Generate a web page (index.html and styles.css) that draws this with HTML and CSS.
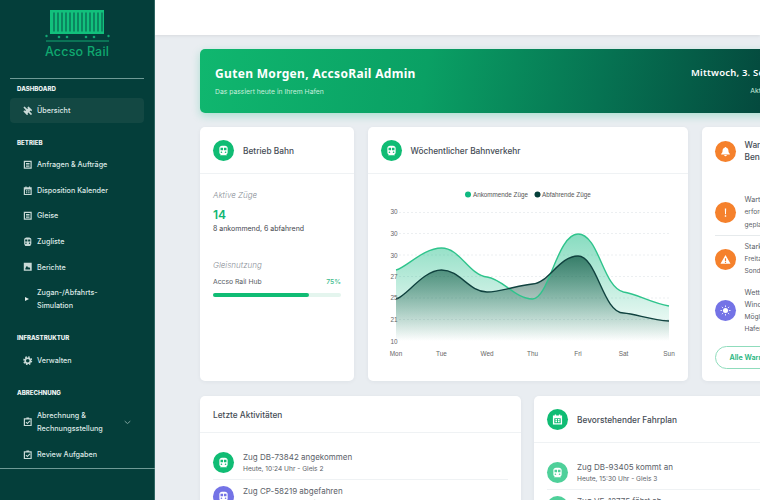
FILE: index.html
```html
<!DOCTYPE html>
<html lang="de">
<head>
<meta charset="utf-8">
<title>Accso Rail</title>
<link rel="stylesheet" href="styles.css">
</head>
<body>
<svg class="defs" aria-hidden="true">
  <symbol id="i-train" viewBox="0 0 24 24"><path fill="currentColor" fill-rule="evenodd" d="M12 1.500C6.500 1.500 3 2.500 3 6.500V17a3.500 3.500 0 0 0 3 3.400L4.500 22v.5h15V22L18 20.400a3.500 3.500 0 0 0 3-3.400V6.500C21 2.500 17.500 1.500 12 1.500ZM5.500 6h5.500v5.500H5.500Zm7.500 0h5.500v5.500H13ZM7.500 14a1.800 1.800 0 1 1 0 3.600a1.800 1.800 0 0 1 0-3.600Zm9 0a1.800 1.800 0 1 1 0 3.600a1.800 1.800 0 0 1 0-3.600Z"/></symbol>
  <symbol id="i-board" viewBox="0 0 24 24"><path fill="currentColor" fill-rule="evenodd" d="M2 2h20v20H2ZM5 5v14h14V5ZM7.500 7.500h9v2.500h-9Zm0 4h9V14h-9Zm0 3.500h9v2h-9Z"/></symbol>
  <symbol id="i-cal" viewBox="0 0 24 24"><path fill="currentColor" fill-rule="evenodd" d="M6 1h3v2h6V1h3v2h4v20H2V3h4ZM5 9v11h14V9ZM7.500 11h3.500v3H7.500Zm5.500 0h3.500v3H13Zm-5.500 4.500h3.500V18H7.500Zm5.500 0h3.500V18H13Z"/></symbol>
  <symbol id="i-chart" viewBox="0 0 24 24"><path fill="currentColor" fill-rule="evenodd" d="M2 2h20v20H2ZM6 19h12v-3.500l-3-3-2 2-3-5-4 6Z"/></symbol>
  <symbol id="i-gear" viewBox="0 0 24 24"><circle cx="12" cy="12" r="6.500" fill="none" stroke="currentColor" stroke-width="4"/><circle cx="12" cy="12" r="9.500" fill="none" stroke="currentColor" stroke-width="4" stroke-dasharray="4 3.460"/></symbol>
  <symbol id="i-check" viewBox="0 0 24 24"><path fill="currentColor" fill-rule="evenodd" d="M8.500 1h7v2H22v20H2V3h6.500ZM5 6v14h14V6ZM16.500 9l2 2-7.500 7.500-4.500-4.500 2-2 2.500 2.500Z"/></symbol>
  <symbol id="i-tools" viewBox="0 0 24 24"><path fill="currentColor" d="M4 1 1 4l6.500 6.500-2 2L3 11 1 14l9 9 3-2-1.500-2.500 2-2L20 23l3-3-6.500-6.500 2-2L21 13l2-3-9-9-3 2 1.500 2.500-2 2Z"/></symbol>
</svg>
<div class="app">
  <aside class="sidebar">
    <div class="brand">
      <svg class="logo" viewBox="0 0 65 33" width="65" height="33" aria-hidden="true">
        <rect x="5" y="0" width="54" height="24" fill="#12c07c"/>
        <path d="M9 2.500v19M13 2.500v19M17 2.500v19M21 2.500v19M25 2.500v19M29 2.500v19M33 2.500v19M37 2.500v19M41 2.500v19M45 2.500v19M49 2.500v19M53 2.500v19M57 2.500v19" stroke="#07584a" stroke-width="1.100"/>
        <path d="M1 31h63" stroke="#12a873" stroke-width="1"/>
        <circle cx="1.500" cy="26" r="1.200" fill="#12a873"/><circle cx="63.500" cy="26" r="1.200" fill="#12a873"/>
        <circle cx="14" cy="27" r="1.300" fill="#12a873"/><circle cx="22" cy="27" r="1.300" fill="#12a873"/><circle cx="41" cy="27" r="1.300" fill="#12a873"/><circle cx="49" cy="27" r="1.300" fill="#12a873"/>
      </svg>
      <div class="brand-name">Accso Rail</div>
    </div>
    <nav class="nav">
      <div class="nav-label">DASHBOARD</div>
      <a class="nav-item active"><svg class="nav-icon"><use href="#i-tools"/></svg><span>Übersicht</span></a>
      <div class="nav-label spaced">BETRIEB</div>
      <a class="nav-item"><svg class="nav-icon"><use href="#i-board"/></svg><span>Anfragen &amp; Aufträge</span></a>
      <a class="nav-item"><svg class="nav-icon"><use href="#i-cal"/></svg><span>Disposition Kalender</span></a>
      <a class="nav-item"><svg class="nav-icon"><use href="#i-board"/></svg><span>Gleise</span></a>
      <a class="nav-item"><svg class="nav-icon"><use href="#i-train"/></svg><span>Zugliste</span></a>
      <a class="nav-item"><svg class="nav-icon"><use href="#i-chart"/></svg><span>Berichte</span></a>
      <a class="nav-item tall"><span class="nav-play"></span><span>Zugan-/Abfahrts-<br>Simulation</span></a>
      <div class="nav-label spaced">INFRASTRUKTUR</div>
      <a class="nav-item"><svg class="nav-icon"><use href="#i-gear"/></svg><span>Verwalten</span></a>
      <div class="nav-label spaced">ABRECHNUNG</div>
      <a class="nav-item tall"><svg class="nav-icon"><use href="#i-check"/></svg><span>Abrechnung &amp;<br>Rechnungsstellung</span>
        <svg class="chev" viewBox="0 0 10 6"><path d="M1 1l4 3.500L9 1" fill="none" stroke="currentColor" stroke-width="1.200"/></svg></a>
      <a class="nav-item"><svg class="nav-icon"><use href="#i-check"/></svg><span>Review Aufgaben</span></a>
    </nav>
    <div class="side-foot"></div>
  </aside>

  <main class="main">
    <header class="topbar"></header>
    <div class="content">
      <section class="banner">
        <div>
          <h1>Guten Morgen, AccsoRail Admin</h1>
          <p>Das passiert heute in Ihrem Hafen</p>
        </div>
        <div class="banner-right">
          <div class="date">Mittwoch, 3. September 2025</div>
          <p>Aktualisiert um 10:24 Uhr</p>
        </div>
      </section>

      <div class="row-top">
        <section class="card">
          <div class="card-head">
            <span class="badge green"><svg><use href="#i-train"/></svg></span>
            <h2>Betrieb Bahn</h2>
          </div>
          <div class="stats">
            <div class="stat-label">Aktive Züge</div>
            <div class="stat-num">14</div>
            <div class="stat-sub">8 ankommend, 6 abfahrend</div>
            <div class="stat-label second">Gleisnutzung</div>
            <div class="usage"><span>Accso Rail Hub</span><b>75%</b></div>
            <div class="bar"><div class="bar-fill"></div></div>
          </div>
        </section>

        <section class="card">
          <div class="card-head">
            <span class="badge green"><svg><use href="#i-train"/></svg></span>
            <h2>Wöchentlicher Bahnverkehr</h2>
          </div>
          <svg class="chart" viewBox="367 174 321 207" width="321" height="207">
            <defs>
              <linearGradient id="gGreen" gradientUnits="userSpaceOnUse" x1="0" y1="234" x2="0" y2="341">
                <stop offset="0" stop-color="#10b981" stop-opacity=".5"/>
                <stop offset="1" stop-color="#10b981" stop-opacity="0"/>
              </linearGradient>
              <linearGradient id="gDark" gradientUnits="userSpaceOnUse" x1="0" y1="256" x2="0" y2="341">
                <stop offset="0" stop-color="#064e3b" stop-opacity=".68"/>
                <stop offset="1" stop-color="#064e3b" stop-opacity="0"/>
              </linearGradient>
            </defs>
            <g class="grid-lines">
              <path d="M398 212.500H668M398 233.500H668M398 255H668M398 276.500H668M398 298H668M398 319.500H668"/>
            </g>
            <path fill="url(#gGreen)" d="M395 270C405 268 422 248 440.500 248C459 248 468 275 486 277C502 279 514 299 531.500 299C548 299 556 234 577 234C598 234 602 288 622.500 292C636 294 650 303 668 306V341H395Z"/>
            <path fill="url(#gDark)" d="M395 299C405 297 422 270 440.500 270C459 270 468 292 486 292C500 292 518 285 531.500 284C548 283 558 256 577 256C596 256 602 313 622.500 313C635 314 650 320 668 321V341H395Z"/>
            <path class="line-green" d="M395 270C405 268 422 248 440.500 248C459 248 468 275 486 277C502 279 514 299 531.500 299C548 299 556 234 577 234C598 234 602 288 622.500 292C636 294 650 303 668 306"/>
            <path class="line-dark" d="M395 299C405 297 422 270 440.500 270C459 270 468 292 486 292C500 292 518 285 531.500 284C548 283 558 256 577 256C596 256 602 313 622.500 313C635 314 650 320 668 321"/>
            <circle cx="467" cy="194.500" r="3" fill="#10b981"/>
            <text class="legend" x="472" y="197">Ankommende Züge</text>
            <circle cx="536.500" cy="194.500" r="3" fill="#063f3a"/>
            <text class="legend" x="541" y="197">Abfahrende Züge</text>
            <g class="axis" text-anchor="middle">
              <text x="393" y="214">30</text><text x="393" y="236">30</text><text x="393" y="257.500">30</text>
              <text x="393" y="279">27</text><text x="393" y="300">25</text><text x="393" y="321.500">21</text><text x="393" y="343.500">10</text>
              <text x="395" y="355.500">Mon</text><text x="440.500" y="355.500">Tue</text><text x="486" y="355.500">Wed</text>
              <text x="531.500" y="355.500">Thu</text><text x="577" y="355.500">Fri</text><text x="622.500" y="355.500">Sat</text><text x="668" y="355.500">Sun</text>
            </g>
          </svg>
        </section>

        <section class="card">
          <div class="card-head plain">
            <span class="badge orange"><svg viewBox="0 0 24 24"><path fill="currentColor" d="M12 2a2 2 0 0 1 2 1.800c3.500 .8 4.500 3.700 4.500 7.200 0 3 1 4 3 6v1.500h-19V17c2-2 3-3 3-6 0-3.500 1-6.400 4.500-7.200A2 2 0 0 1 12 2Zm-2.800 17.500h5.600a2.800 2.800 0 0 1-5.600 0Z"/></svg></span>
            <h2>Warnungen &amp; Benachrichtigungen</h2>
          </div>
          <div class="alerts">
            <div class="alert divided">
              <span class="badge orange"><svg viewBox="0 0 24 24"><path fill="currentColor" d="M10.500 3h3l-.5 13h-2Zm0 15h3v3h-3Z"/></svg></span>
              <div><div class="alert-title">Wartung fällig</div><div class="alert-sub">erforderlich für Kran 3,<br>geplant für morgen</div></div>
            </div>
            <div class="alert">
              <span class="badge orange"><svg viewBox="0 0 24 24"><path fill="currentColor" fill-rule="evenodd" d="M12 2l11 19H1Zm-1.300 7v6.500h2.600V9Zm0 8v2.500h2.600V17Z"/></svg></span>
              <div><div class="alert-title">Starker Verkehr</div><div class="alert-sub">Freitag: erhöhtes Aufkommen,<br>Sonderzüge möglich</div></div>
            </div>
            <div class="alert tight">
              <span class="badge violet"><svg viewBox="0 0 24 24"><circle cx="12" cy="12" r="5.500" fill="currentColor"/><path d="M12 1v3.500M12 19.500V23M1 12h3.500M19.500 12H23M4 4l2.500 2.500M17.500 17.500 20 20M4 20l2.500-2.500M17.500 6.500 20 4" stroke="currentColor" stroke-width="1.800"/></svg></span>
              <div><div class="alert-title">Wetter-<br>Windwarnung</div><div class="alert-sub">Mögliche Sperrung im<br>Hafenbereich</div></div>
            </div>
            <a class="btn-all">Alle Warnungen</a>
          </div>
        </section>
      </div>

      <div class="row-bottom">
        <section class="card">
          <div class="card-head slim"><h2>Letzte Aktivitäten</h2></div>
          <div class="feed">
            <div class="feed-item">
              <span class="badge green"><svg><use href="#i-train"/></svg></span>
              <div><div class="feed-title">Zug DB-73842 angekommen</div><div class="feed-sub">Heute, 10:24 Uhr - Gleis 2</div></div>
            </div>
            <div class="feed-item">
              <span class="badge violet"><svg><use href="#i-train"/></svg></span>
              <div><div class="feed-title">Zug CP-58219 abgefahren</div><div class="feed-sub">Heute, 09:47 Uhr - Gleis 1</div></div>
            </div>
          </div>
        </section>
        <section class="card">
          <div class="card-head">
            <span class="badge green"><svg><use href="#i-cal"/></svg></span>
            <h2>Bevorstehender Fahrplan</h2>
          </div>
          <div class="feed">
            <div class="feed-item">
              <span class="badge mint"><svg><use href="#i-train"/></svg></span>
              <div><div class="feed-title">Zug DB-93405 kommt an</div><div class="feed-sub">Heute, 15:30 Uhr - Gleis 3</div></div>
            </div>
            <div class="feed-item">
              <span class="badge mint"><svg><use href="#i-train"/></svg></span>
              <div><div class="feed-title">Zug VE-12775 fährt ab</div><div class="feed-sub">Heute, 16:15 Uhr - Gleis 1</div></div>
            </div>
          </div>
        </section>
      </div>
    </div>
  </main>
</div>
</body>
</html>
```
FILE: styles.css
```css
* { box-sizing: border-box; }
html, body { margin: 0; height: 100%; overflow: hidden; }
body { font-family: Inter, "Noto Sans", sans-serif; color: #444b55; background: #e9edf1; }
.defs { display: none; }
h1, h2, p { margin: 0; }

.app { display: flex; height: 500px; }

.sidebar { flex: 0 0 155px; display: flex; flex-direction: column; background: #043e3a; color: #e3ecea; border-right: 1px solid #2f6662; }
.brand { height: 79px; margin: 0 10px; border-bottom: 1px solid #6f9a95; display: flex; flex-direction: column; align-items: center; padding-top: 10px; }
.logo { display: block; }
.brand-name { font-size: 12.500px; font-weight: 500; color: #10a86f; line-height: 17px; letter-spacing: .2px; }

.nav { flex: 1; padding: 5.500px 10px 0; }
.nav-label { font-size: 6.100px; font-weight: 800; line-height: 8px; height: 8px; margin: 0 0 5.500px 7px; color: #eef4f3; }
.nav-label.spaced { margin-top: 15.500px; }
.nav-item { display: flex; align-items: center; gap: 4.500px; height: 25.600px; padding-left: 13px; font-size: 7.200px; font-weight: 500; line-height: 13px; color: #dfe9e7; border-radius: 4px; }
.nav-item.active { background: #134843; height: 25px; }
.nav-item.tall { height: 39px; }
.nav-icon { flex: 0 0 9.500px; width: 9.500px; height: 9.500px; color: #c9dad7; }
.nav-play { flex: 0 0 4px; width: 0; height: 0; border-left: 4px solid #e3ecea; border-top: 2.500px solid transparent; border-bottom: 2.500px solid transparent; margin-left: 2px; margin-right: 3.500px; }
.chev { width: 7px; height: 5px; margin-left: auto; margin-right: 13px; color: #8fb0ac; }
.side-foot { height: 32px; border-top: 1px solid #6f9a95; margin-right: -1px; }

.main { flex: 1; min-width: 0; overflow: hidden; }
.topbar { height: 35px; background: #fff; box-shadow: 0 1px 3px rgba(0,0,0,.08); }
.content { width: 690px; padding: 14px 0 0 45px; display: flex; flex-direction: column; }

.banner { height: 64px; border-radius: 5px; padding: 0 14px 0 15px; display: flex; justify-content: space-between; align-items: center; color: #fff; background: linear-gradient(100deg, #10b76f 0%, #0aa064 35%, #067352 62%, #04483d 88%); box-shadow: 0 3px 8px rgba(16,185,129,.28); }
.banner h1 { font-family: "Noto Sans", sans-serif; font-size: 12px; font-weight: 700; line-height: 16px; letter-spacing: .32px; }
.banner p { font-size: 6.800px; line-height: 10px; margin-top: 5px; color: #c9eedd; }
.banner-right { text-align: right; }
.date { font-family: "Noto Sans", sans-serif; font-size: 9.500px; font-weight: 600; line-height: 14px; letter-spacing: .2px; }
.banner-right p { margin-top: 6px; }

.row-top { display: grid; grid-template-columns: 154px 320.500px 143px; column-gap: 13.500px; margin-top: 14px; height: 254px; }
.row-bottom { display: grid; grid-template-columns: 321px 311px; column-gap: 13px; margin-top: 15px; }

.card { background: #fff; border-radius: 5px; box-shadow: 0 1px 4px rgba(20,40,60,.05); overflow: hidden; }
.card-head { height: 47px; padding: 1px 13px 0; display: flex; align-items: center; gap: 9px; border-bottom: 1px solid #eff2f4; }
.card-head.slim { height: 37px; }
.card-head.plain { border-bottom: 0; }
.card-head h2 { font-size: 8.300px; font-weight: 500; line-height: 12px; color: #454c55; }

.badge { flex: 0 0 21px; width: 21px; height: 21px; border-radius: 50%; display: flex; align-items: center; justify-content: center; color: #fff; }
.badge svg { width: 11px; height: 11px; }
.green { background: #10bc74; }
.mint { background: #4fd09a; }
.orange { background: #f5812c; }
.violet { background: #7473e6; }

.stats { padding: 16px 13px 0; }
.stat-label { font-size: 8px; font-weight: 300; font-style: italic; line-height: 11px; color: #8a9098; }
.stat-label.second { margin-top: 26px; }
.stat-num { font-size: 12px; font-weight: 600; line-height: 15px; margin-top: 6px; color: #10b673; }
.stat-sub { font-size: 7px; line-height: 10px; margin-top: 2px; color: #3f454c; }
.usage { display: flex; justify-content: space-between; font-size: 6.800px; line-height: 10px; margin-top: 6px; color: #555b63; }
.usage b { color: #3dbb8b; font-weight: 500; }
.bar { height: 4px; border-radius: 2px; background: #e4f5ee; margin-top: 6px; }
.bar-fill { width: 75%; height: 100%; border-radius: 2px; background: #10bc74; }

.chart { display: block; }
.grid-lines path { fill: none; stroke: #eceff1; stroke-width: 1; stroke-dasharray: 2 2; }
.line-green { fill: none; stroke: #2fc48c; stroke-width: 1.400; }
.line-dark { fill: none; stroke: #10423f; stroke-width: 1.400; }
.legend { font-family: "Liberation Sans", sans-serif; font-size: 6.300px; fill: #555; }
.axis text { font-family: "Liberation Sans", sans-serif; font-size: 6.400px; fill: #666; }

.alerts { padding: 0 13px; margin-top: 20px; }
.alert { display: flex; align-items: center; gap: 9px; padding: 0 0 4px; margin-bottom: 5px; }
.alert.divided { border-bottom: 1px solid #e6eaec; }
.alert > div { white-space: nowrap; }
.alert-title { font-size: 7.200px; line-height: 12.300px; color: #5a6068; }
.alert-sub { font-size: 6.600px; line-height: 12.300px; color: #5a6068; }
.alert.tight .alert-title, .alert.tight .alert-sub { line-height: 12px; }
.btn-all { display: flex; align-items: center; height: 23px; padding-left: 14px; margin-top: 7px; border: 1px solid #8fdcbc; border-radius: 12px; font-size: 7.200px; font-weight: 600; color: #1cb57d; white-space: nowrap; }

.feed { padding: 13px 13px 0; }
.feed-item { display: flex; align-items: center; gap: 9px; height: 34px; border-bottom: 1px solid #eff2f4; }
.feed-title { font-size: 8px; line-height: 11px; color: #5b6169; }
.feed-sub { font-size: 6.600px; line-height: 10px; margin-top: 1px; color: #5b6169; }
```
